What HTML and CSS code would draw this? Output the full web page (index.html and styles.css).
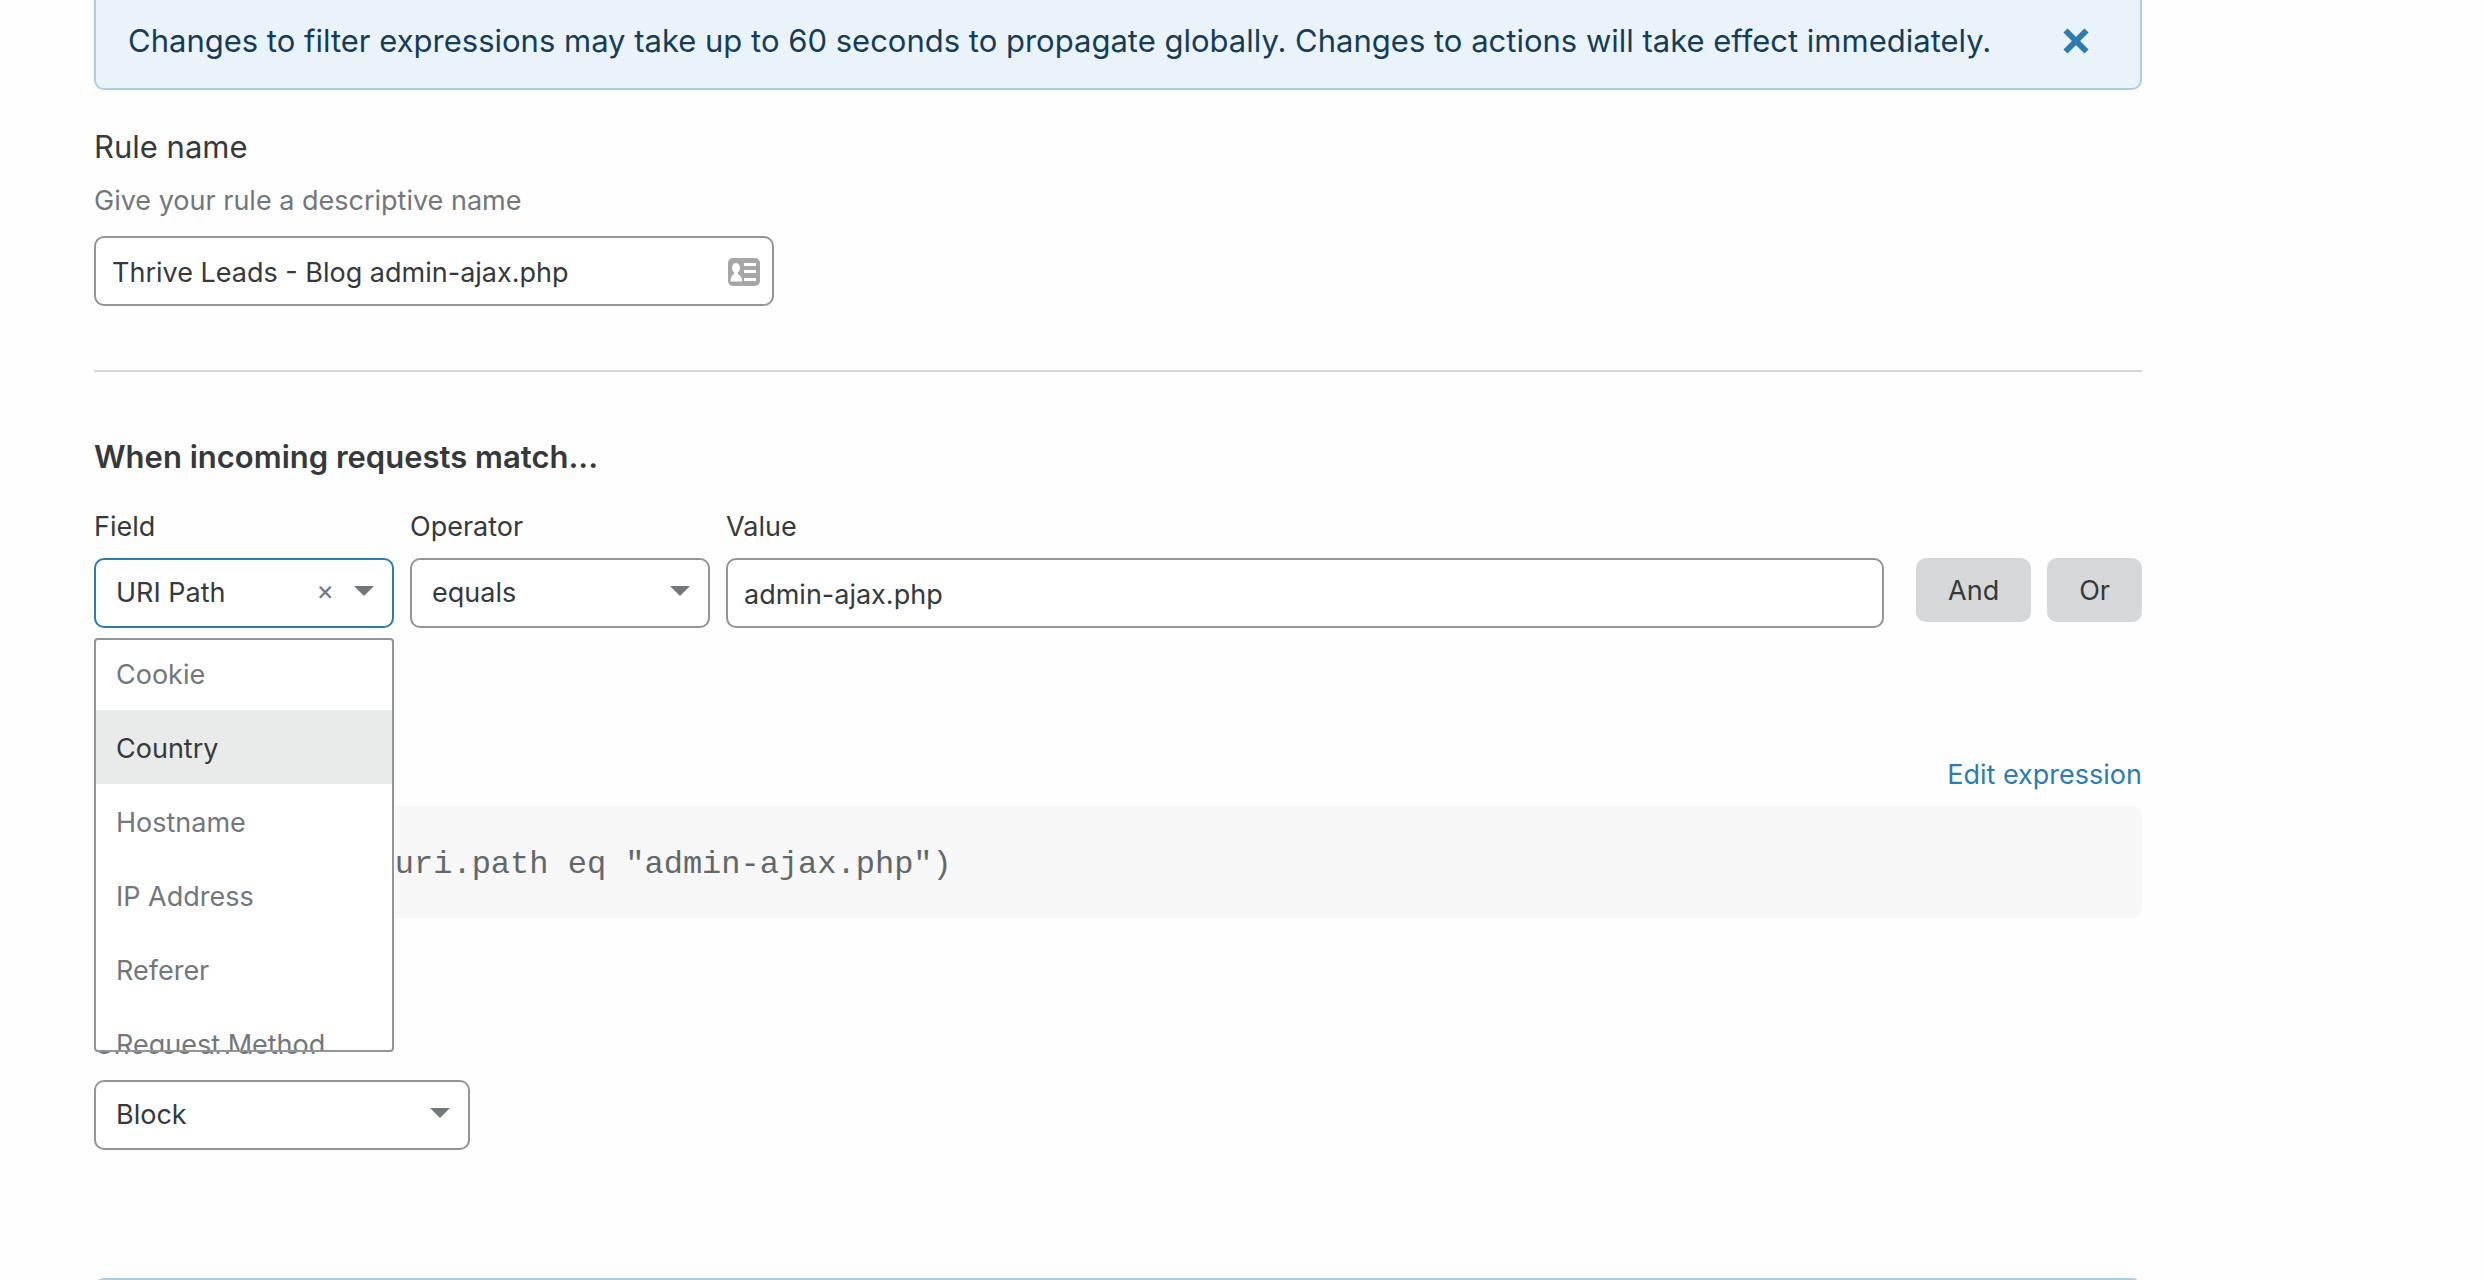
FILE: index.html
```html
<!DOCTYPE html>
<html lang="en">
<head>
    <meta charset="UTF-8">
    <meta name="viewport" content="width=device-width, initial-scale=1.0">
    <title>Firewall Rule</title>
    <link rel="stylesheet" href="styles.css">
</head>
<body>
    <main class="container">
        <div class="banner">
            <p>Changes to filter expressions may take up to 60 seconds to propagate globally. Changes to actions will take effect immediately.</p>
            <button class="close-btn" type="button" aria-label="Dismiss">
                <svg viewBox="0 0 26 26" width="26" height="26"><path d="M2.5 2.5l21 21M23.5 2.5l-21 21" stroke="currentColor" stroke-width="6"/></svg>
            </button>
        </div>

        <form>
            <section class="rule-name">
                <label class="title" for="ruleName">Rule name</label>
                <p class="hint">Give your rule a descriptive name</p>
                <div class="control name-control">
                    <input class="box" type="text" id="ruleName" value="Thrive Leads - Blog admin-ajax.php">
                    <svg class="card-icon" viewBox="0 0 32 28" width="32" height="28">
                        <rect width="32" height="28" rx="5" fill="#a6a6a6"/>
                        <path d="M16 6.500h12M16 13.500h12M16 21.500h12" stroke="#fff" stroke-width="3"/>
                        <ellipse cx="8" cy="10" rx="4" ry="5" fill="#fff"/>
                        <path d="M6 13h4v3q4 2 4 7.500H2.500q0-5.500 3.500-7.500z" fill="#fff"/>
                    </svg>
                </div>
            </section>

            <hr>

            <h2>When incoming requests match...</h2>
            <div class="expression-row">
                <div class="field">
                    <label for="field">Field</label>
                    <div class="control">
                        <select class="box focused" id="field">
                            <option>URI Path</option>
                            <option>Cookie</option>
                            <option>Country</option>
                        </select>
                        <button class="clear-btn" type="button" aria-label="Clear">×</button>
                        <svg class="arrow" viewBox="0 0 20 10" width="20" height="10"><path d="M0 0h20L10 10z"/></svg>
                        <ul class="menu">
                            <li>Cookie</li>
                            <li class="active">Country</li>
                            <li>Hostname</li>
                            <li>IP Address</li>
                            <li>Referer</li>
                            <li>Request Method</li>
                        </ul>
                    </div>
                </div>
                <div class="field">
                    <label for="operator">Operator</label>
                    <div class="control">
                        <select class="box" id="operator">
                            <option>equals</option>
                        </select>
                        <svg class="arrow" viewBox="0 0 20 10" width="20" height="10"><path d="M0 0h20L10 10z"/></svg>
                    </div>
                </div>
                <div class="field value-field">
                    <label for="value">Value</label>
                    <input class="box" type="text" id="value" value="admin-ajax.php">
                </div>
                <div class="button-group">
                    <button class="btn" type="button">And</button>
                    <button class="btn" type="button">Or</button>
                </div>
            </div>

            <div class="preview">
                <a href="#">Edit expression</a>
                <pre>(http.request.uri.path eq "admin-ajax.php")</pre>
            </div>

            <section class="action">
                <label class="hint" for="action">Choose an action</label>
                <div class="control action-control">
                    <select class="box" id="action">
                        <option>Block</option>
                    </select>
                    <svg class="arrow" viewBox="0 0 20 10" width="20" height="10"><path d="M0 0h20L10 10z"/></svg>
                </div>
            </section>
        </form>

        <div class="banner next-banner"></div>
    </main>
</body>
</html>
```

FILE: styles.css
```css
* {
    box-sizing: border-box;
}
body {
    margin: 0;
    font-family: Inter, "Liberation Sans", sans-serif;
    font-size: 27px;
    line-height: 40px;
    color: #36393a;
    background-color: #fefefe;
}
.container {
    max-width: 2236px;
    padding: 0 94px;
}
p, h2, ul, pre {
    margin: 0;
}
input, select, button {
    font: inherit;
    color: inherit;
}
.banner {
    display: flex;
    justify-content: space-between;
    align-items: center;
    padding: 21px 51px 27px 32px;
    border: 2px solid #a9d0ea;
    border-top: none;
    border-radius: 0 0 10px 10px;
    background-color: #ebf3fa;
    color: #163d57;
    font-size: 31px;
}
.next-banner {
    border-top: 2px solid #a9d0ea;
    border-radius: 10px;
}
.close-btn {
    display: flex;
    padding: 0;
    border: none;
    background: none;
    color: #2c7cb0;
}
label {
    display: block;
}
.rule-name {
    padding-top: 37px;
}
.title {
    font-size: 31px;
}
.hint {
    color: #72777b;
}
.rule-name .hint {
    margin: 14px 0 15px;
}
.control {
    position: relative;
}
.name-control {
    max-width: 680px;
}
.box {
    display: block;
    width: 100%;
    height: 70px;
    padding: 2px 16px 0;
    border: 2px solid #8f9599;
    border-radius: 10px;
    background-color: #fff;
    outline: none;
}
select.box {
    appearance: none;
    padding: 0 20px;
}
.focused {
    border-color: #2c7cb0;
}
.card-icon {
    position: absolute;
    top: 22px;
    right: 14px;
}
.arrow {
    position: absolute;
    top: 28px;
    right: 20px;
    fill: #72777b;
}
.clear-btn {
    position: absolute;
    top: 13px;
    right: 60px;
    padding: 0;
    border: none;
    background: none;
    color: #72777b;
}
hr {
    height: 2px;
    margin: 64px 0 65px;
    border: none;
    background-color: #d5d7d8;
}
h2 {
    font-size: 31px;
    line-height: 40px;
    font-weight: 600;
}
.expression-row {
    display: flex;
    gap: 16px;
    margin-top: 30px;
}
.field {
    width: 300px;
}
.value-field {
    flex: 1;
}
.field label {
    margin-bottom: 11px;
}
.button-group {
    display: flex;
    gap: 16px;
    margin: 51px 0 0 16px;
}
.btn {
    height: 64px;
    padding: 2px 32px 0;
    border: none;
    border-radius: 10px;
    background-color: #d5d7d8;
}
.menu {
    position: absolute;
    top: 80px;
    left: 0;
    z-index: 1;
    width: 100%;
    height: 414px;
    padding: 0;
    overflow: hidden;
    list-style: none;
    border: 2px solid #8f9599;
    border-radius: 4px;
    background-color: #fff;
    color: #72777b;
}
.menu li {
    padding: 19px 20px 15px;
}
.menu li:first-child {
    padding-top: 15px;
}
.menu .active {
    background-color: #e9ebea;
    color: #36393a;
}
.preview {
    margin-top: 127px;
}
.preview a {
    display: block;
    width: fit-content;
    margin-left: auto;
    color: #2c7cb0;
    text-decoration: none;
}
pre {
    margin-top: 11px;
    padding: 39px 32px 33px;
    border-radius: 10px;
    background-color: #f7f7f7;
    color: #62676a;
    font: 32px/40px "Liberation Mono", monospace;
}
.action {
    padding: 107px 0 128px;
}
.action .hint {
    margin-bottom: 15px;
}
.action-control {
    max-width: 376px;
}
```
